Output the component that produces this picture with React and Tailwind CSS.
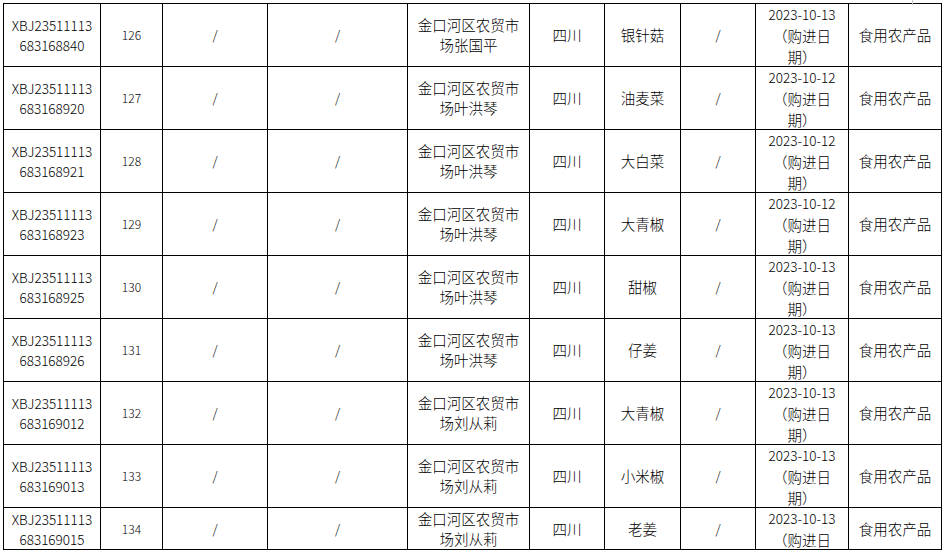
import React from "react";

const rows = [
  ["683168840", "126", "场张国平", "银针菇", "2023-10-13"],
  ["683168920", "127", "场叶洪琴", "油麦菜", "2023-10-12"],
  ["683168921", "128", "场叶洪琴", "大白菜", "2023-10-12"],
  ["683168923", "129", "场叶洪琴", "大青椒", "2023-10-12"],
  ["683168925", "130", "场叶洪琴", "甜椒", "2023-10-13"],
  ["683168926", "131", "场叶洪琴", "仔姜", "2023-10-13"],
  ["683169012", "132", "场刘从莉", "大青椒", "2023-10-13"],
  ["683169013", "133", "场刘从莉", "小米椒", "2023-10-13"],
  ["683169015", "134", "场刘从莉", "老姜", "2023-10-13"],
];

const cell = "flex shrink-0 flex-col items-center justify-center border-r border-black text-center overflow-hidden";

function Row({ r, last }) {
  const h = last ? "h-[42px]" : "h-[63px]";
  return (
    <div className={`flex ${h} border-b border-black`}>
      <div className={`${cell} w-[97px] text-[13.5px] leading-[20px]`}>
        <span>XBJ23511113</span>
        <span>{r[0]}</span>
      </div>
      <div className={`${cell} w-[62px] text-[12px]`}>{r[1]}</div>
      <div className={`${cell} w-[105px] text-[13px]`}>/</div>
      <div className={`${cell} w-[140px] text-[13px]`}>/</div>
      <div className={`${cell} w-[122px] leading-[20px]`}>
        <span>金口河区农贸市</span>
        <span>{r[2]}</span>
      </div>
      <div className={`${cell} w-[75px]`}>四川</div>
      <div className={`${cell} w-[76px]`}>{r[3]}</div>
      <div className={`${cell} w-[75px] text-[13px]`}>/</div>
      <div className={`flex shrink-0 flex-col items-center justify-start border-r border-black text-center overflow-hidden w-[93px] leading-[21px] pt-[0px]`}>
        <span className="text-[13.5px]">{r[4]}</span>
        <span>（购进日</span>
        <span>期）</span>
      </div>
      <div className={`${cell} w-[93px]`}>食用农产品</div>
    </div>
  );
}

export default function App() {
  return (
    <div
      className="relative w-[947px] h-[554px] bg-white overflow-hidden text-black text-[14.5px]"
      style={{ fontFamily: '"Noto Sans CJK SC", "Noto Sans", sans-serif', fontWeight: 300 }}
    >
      <div className="absolute left-[912px] top-0 h-[5px] w-px bg-[#c8c8c8]" />
      <div className="ml-[3px] mt-[3px] w-max border-l border-t border-black">
        {rows.map((r, i) => (
          <Row key={i} r={r} last={i === rows.length - 1} />
        ))}
      </div>
    </div>
  );
}
